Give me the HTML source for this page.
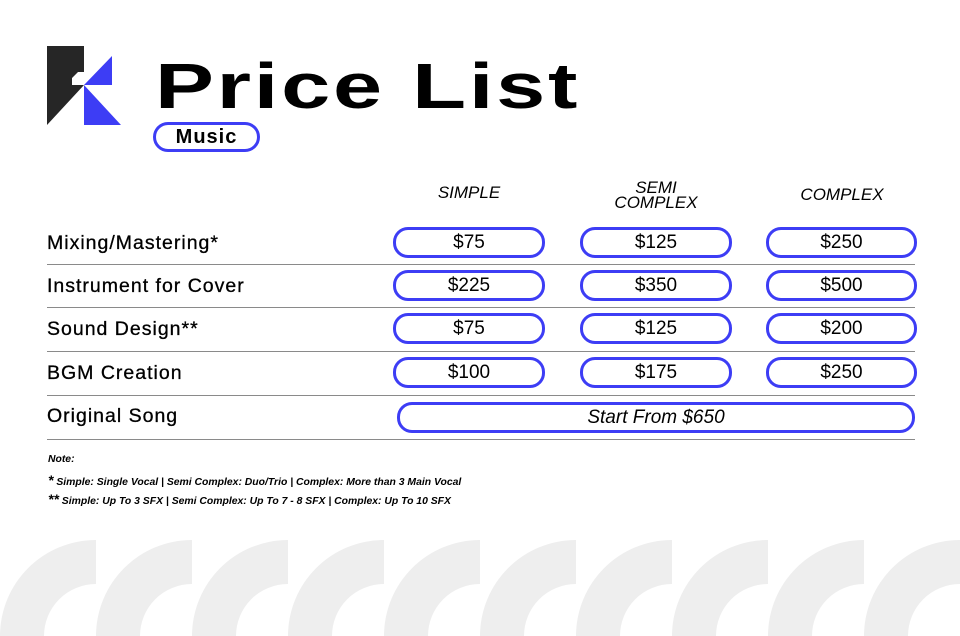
<!DOCTYPE html>
<html><head><meta charset="utf-8"><style>
*{margin:0;padding:0;box-sizing:border-box}
body{width:960px;height:636px;background:#fff;position:relative;overflow:hidden;font-family:"Liberation Sans",sans-serif;color:#000}
.a{position:absolute}
.title{left:155px;top:54px;font-size:64px;font-weight:bold;letter-spacing:2px;transform:scaleX(1.38);transform-origin:left top;white-space:nowrap;line-height:1}
.tag{left:153px;top:122px;width:107px;height:30px;border:3px solid #3d3df5;border-radius:15px;text-align:center;font-weight:bold;font-size:20px;line-height:24px;letter-spacing:1px}
.hd{font-style:italic;font-size:17px;text-align:center;width:152px;line-height:15px}
.lbl{left:47px;font-size:19.5px;letter-spacing:1px;-webkit-text-stroke:0.3px #000}
.pill{height:31px;border:3px solid #3d3df5;border-radius:15px;text-align:center;font-size:19px;line-height:25px}
.ln{left:47px;width:868px;height:1px;background:#8a8a8a}
.note{left:48px;font-style:italic;font-weight:bold;font-size:10.4px}
</style></head><body>
<svg class="a" style="left:0;top:0" width="960" height="636">
<polygon points="47,46 84,46 84,72 78,72 72,78 72,85 84,85 47,125" fill="#262626"/>
<polygon points="84,85 112,56 112,85" fill="#3d3df5"/>
<polygon points="84,85 84,125 121,125" fill="#3d3df5"/>
<g fill="#eeeeee">
<path d="M0,636 A96,96 0 0 1 96,540 L96,584 A52,52 0 0 0 44,636 Z"/>
<path d="M96,636 A96,96 0 0 1 192,540 L192,584 A52,52 0 0 0 140,636 Z"/>
<path d="M192,636 A96,96 0 0 1 288,540 L288,584 A52,52 0 0 0 236,636 Z"/>
<path d="M288,636 A96,96 0 0 1 384,540 L384,584 A52,52 0 0 0 332,636 Z"/>
<path d="M384,636 A96,96 0 0 1 480,540 L480,584 A52,52 0 0 0 428,636 Z"/>
<path d="M480,636 A96,96 0 0 1 576,540 L576,584 A52,52 0 0 0 524,636 Z"/>
<path d="M576,636 A96,96 0 0 1 672,540 L672,584 A52,52 0 0 0 620,636 Z"/>
<path d="M672,636 A96,96 0 0 1 768,540 L768,584 A52,52 0 0 0 716,636 Z"/>
<path d="M768,636 A96,96 0 0 1 864,540 L864,584 A52,52 0 0 0 812,636 Z"/>
<path d="M864,636 A96,96 0 0 1 960,540 L960,584 A52,52 0 0 0 908,636 Z"/>
</g>
</svg>
<div class="a title">Price List</div>
<div class="a tag">Music</div>
<div class="a hd" style="left:393px;top:185px">SIMPLE</div>
<div class="a hd" style="left:580px;top:180px">SEMI<br>COMPLEX</div>
<div class="a hd" style="left:766px;top:187px">COMPLEX</div>

<div class="a lbl" style="top:232px">Mixing/Mastering*</div>
<div class="a pill" style="left:393px;top:227px;width:152px">$75</div>
<div class="a pill" style="left:580px;top:227px;width:152px">$125</div>
<div class="a pill" style="left:766px;top:227px;width:151px">$250</div>
<div class="a ln" style="top:264px"></div>

<div class="a lbl" style="top:275px">Instrument for Cover</div>
<div class="a pill" style="left:393px;top:270px;width:152px">$225</div>
<div class="a pill" style="left:580px;top:270px;width:152px">$350</div>
<div class="a pill" style="left:766px;top:270px;width:151px">$500</div>
<div class="a ln" style="top:307px"></div>

<div class="a lbl" style="top:318px">Sound Design**</div>
<div class="a pill" style="left:393px;top:313px;width:152px">$75</div>
<div class="a pill" style="left:580px;top:313px;width:152px">$125</div>
<div class="a pill" style="left:766px;top:313px;width:151px">$200</div>
<div class="a ln" style="top:351px"></div>

<div class="a lbl" style="top:362px">BGM Creation</div>
<div class="a pill" style="left:393px;top:357px;width:152px">$100</div>
<div class="a pill" style="left:580px;top:357px;width:152px">$175</div>
<div class="a pill" style="left:766px;top:357px;width:151px">$250</div>
<div class="a ln" style="top:395px"></div>

<div class="a lbl" style="top:405px">Original Song</div>
<div class="a pill" style="left:397px;top:402px;width:518px;font-style:italic">Start From $650</div>
<div class="a ln" style="top:439px"></div>

<div class="a note" style="top:454px">Note:</div>
<div class="a note" style="top:472px"><span style="font-size:14px">*</span> Simple: Single Vocal | Semi Complex: Duo/Trio | Complex: More than 3 Main Vocal</div>
<div class="a note" style="top:491px"><span style="font-size:14px">**</span> Simple: Up To 3 SFX | Semi Complex: Up To 7 - 8 SFX | Complex: Up To 10 SFX</div>
</body></html>
